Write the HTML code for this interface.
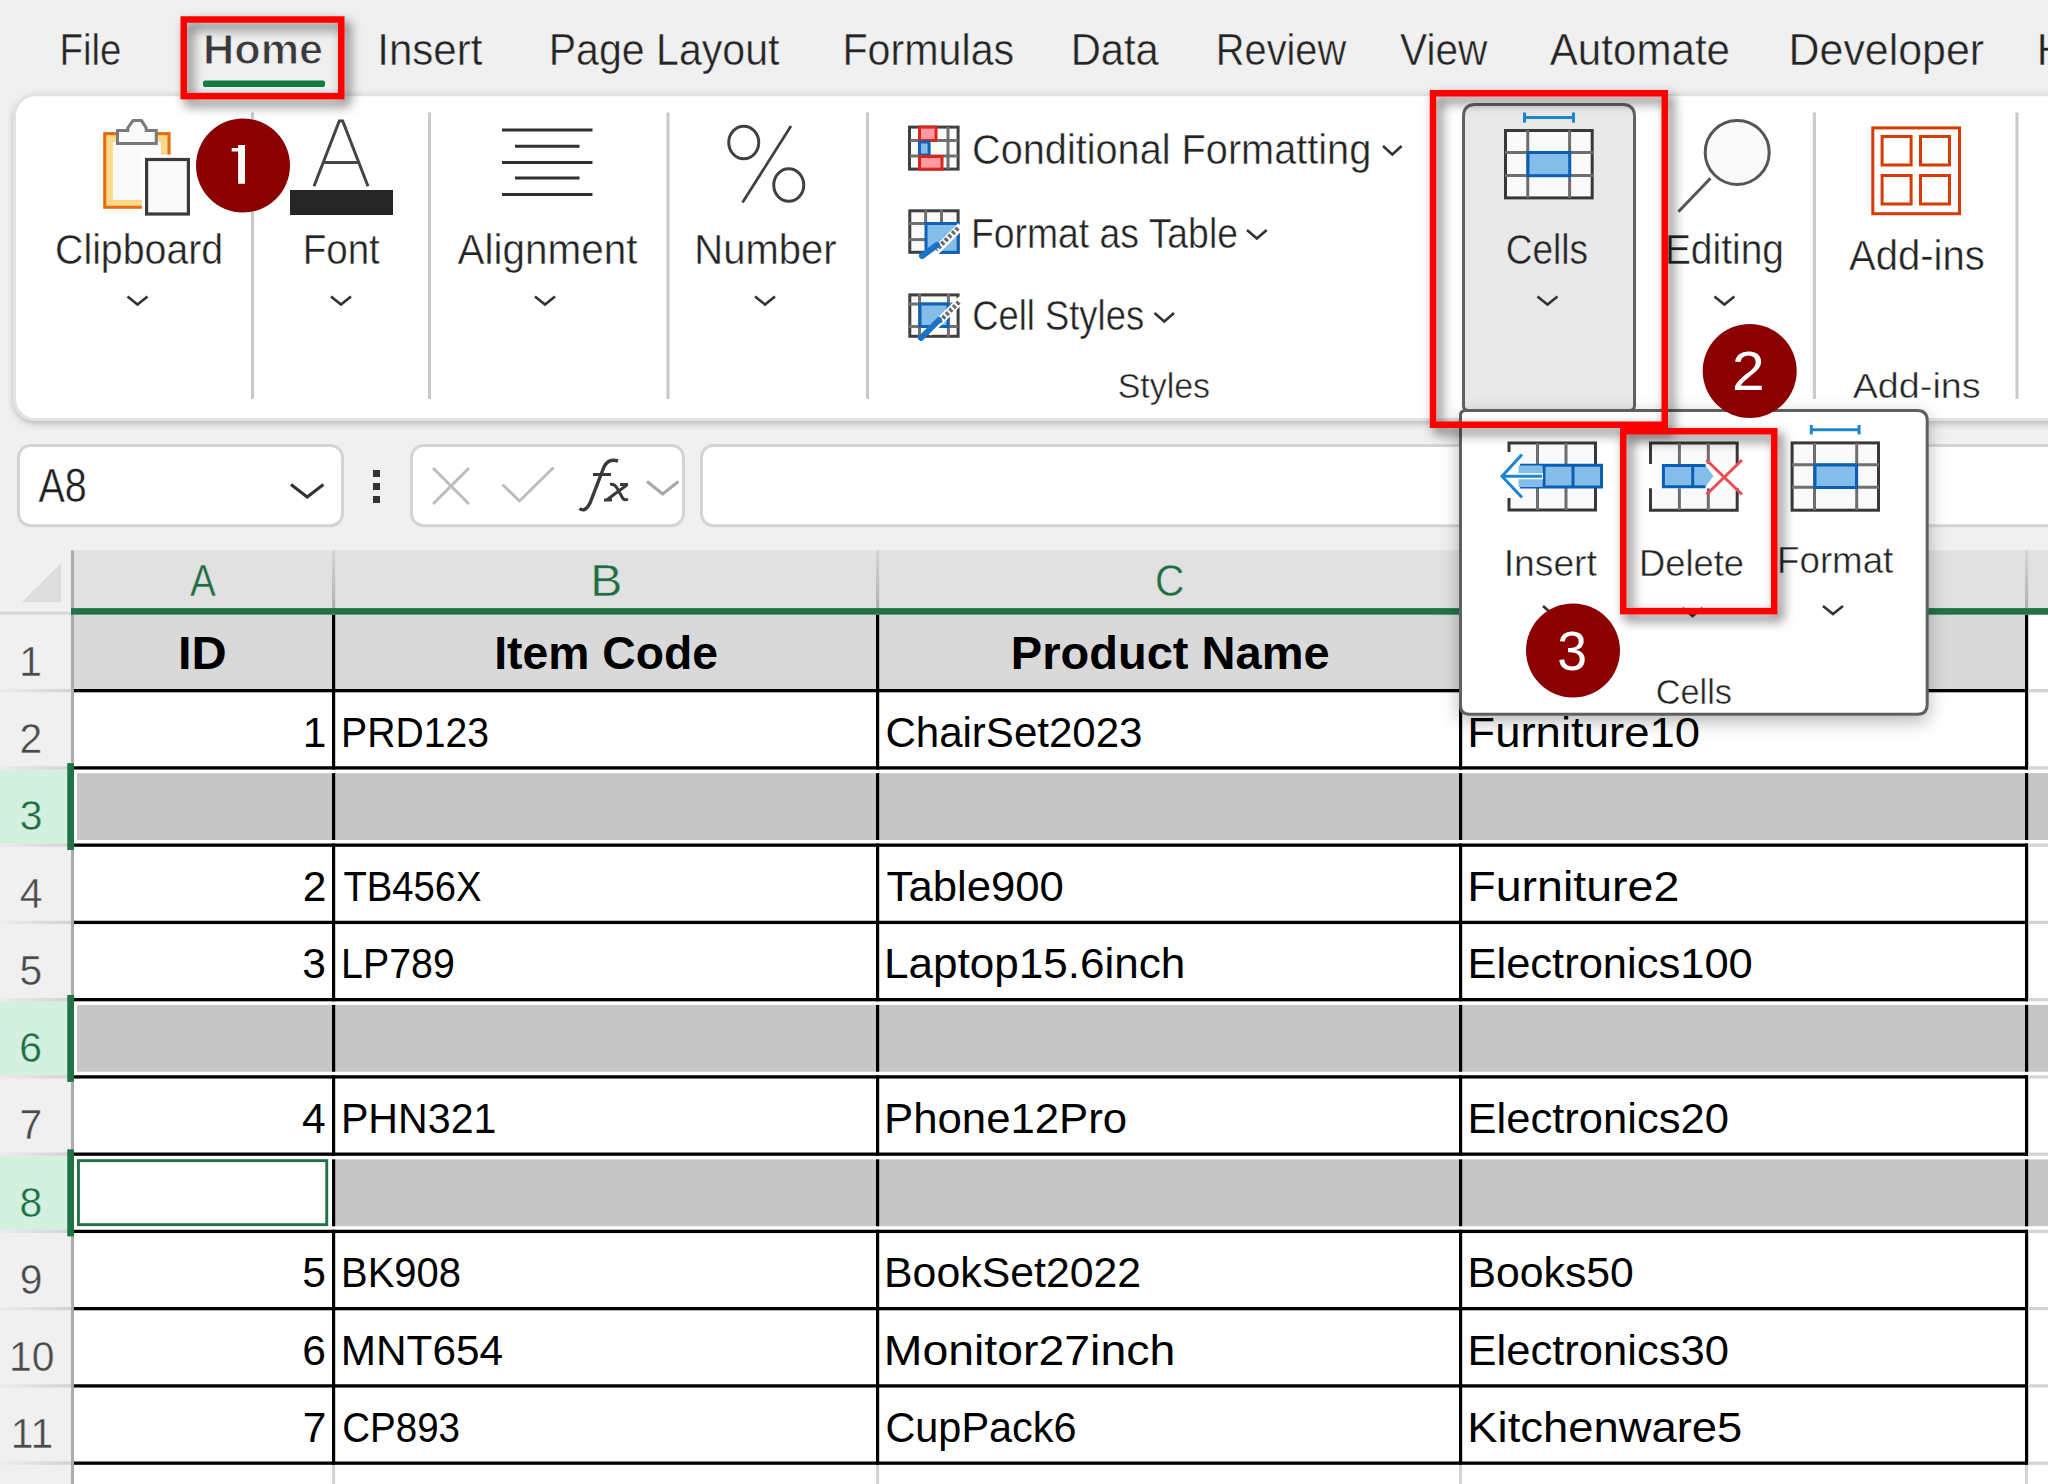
<!DOCTYPE html>
<html><head><meta charset="utf-8"><style>
html,body{margin:0;padding:0;background:#f0f0f0;overflow:hidden;}
svg{display:block;font-family:"Liberation Sans", sans-serif;}
</style></head><body>
<svg width="2048" height="1484" viewBox="0 0 2048 1484">
<defs>
<filter id="ribshadow" x="-5%" y="-10%" width="110%" height="130%"><feDropShadow dx="0" dy="3" stdDeviation="3" flood-color="#000" flood-opacity="0.22"/></filter>
<filter id="popshadow" x="-20%" y="-20%" width="140%" height="140%"><feDropShadow dx="0" dy="6" stdDeviation="9" flood-color="#000" flood-opacity="0.28"/></filter>
<filter id="redshadow" x="-10%" y="-10%" width="120%" height="120%"><feDropShadow dx="5" dy="6" stdDeviation="6" flood-color="#000" flood-opacity="0.6"/></filter>
<linearGradient id="hsep" x1="0" y1="0" x2="0" y2="1"><stop offset="0" stop-color="#d6d6d6"/><stop offset="1" stop-color="#b0b0b0"/></linearGradient>
<linearGradient id="rsep" x1="0" y1="0" x2="1" y2="0"><stop offset="0" stop-color="#ececec"/><stop offset="1" stop-color="#d2d2d2"/></linearGradient>
</defs>
<rect x="0.00" y="0.00" width="2048.00" height="1484.00" fill="#f0f0f0" />
<rect x="203" y="80.5" width="122" height="6.4" rx="2" fill="#107c41"/>

<rect x="14.5" y="94.7" width="2100" height="324.9" rx="21" fill="#ffffff" stroke="#e2e2e2" stroke-width="3" filter="url(#ribshadow)"/>
<rect x="251.00" y="112.50" width="3.00" height="286.50" fill="#c9c9c9" />
<rect x="428.00" y="112.50" width="3.00" height="286.50" fill="#c9c9c9" />
<rect x="666.50" y="112.50" width="3.00" height="286.50" fill="#c9c9c9" />
<rect x="866.00" y="112.50" width="3.00" height="286.50" fill="#c9c9c9" />
<rect x="1812.90" y="112.50" width="3.00" height="286.50" fill="#c9c9c9" />
<rect x="2015.50" y="112.50" width="3.00" height="286.50" fill="#c9c9c9" />
<rect x="103.20" y="132.10" width="67.40" height="76.70" fill="#e46c0a" />
<rect x="106.30" y="135.20" width="61.20" height="70.50" fill="#f8d98b" />
<rect x="112.90" y="141.80" width="48.00" height="58.10" fill="#fafafa" />
<rect x="141.80" y="154.60" width="52.00" height="65.00" fill="#ffffff" />
<rect x="146.60" y="159.50" width="41.80" height="54.50" rx="0" fill="#fafafa" stroke="#3a3a3a" stroke-width="3.2" />
<path d="M117.5,143.4 H156.3 V130.5 H146.2 V128 L141.5,120.6 H133 L127.8,128 V130.5 H117.5 Z" fill="#fafafa" stroke="#7a7a7a" stroke-width="3"/>
<polyline points="314.00,186.30 339.30,121.00 342.70,121.00 368.00,186.30" fill="none" stroke="#454545" stroke-width="3" stroke-linejoin="miter"/>
<line x1="323.00" y1="162.50" x2="359.00" y2="162.50" stroke="#454545" stroke-width="3" />
<rect x="290.00" y="190.00" width="103.00" height="25.00" fill="#262626" />
<rect x="502.00" y="128.50" width="90.50" height="3.00" fill="#303030" />
<rect x="515.00" y="144.75" width="64.50" height="3.00" fill="#303030" />
<rect x="502.00" y="161.00" width="90.50" height="3.00" fill="#303030" />
<rect x="515.00" y="176.50" width="64.50" height="3.00" fill="#303030" />
<rect x="502.00" y="193.00" width="90.50" height="3.00" fill="#303030" />
<ellipse cx="743.75" cy="142.5" rx="15" ry="16.3" fill="none" stroke="#404040" stroke-width="3"/>
<ellipse cx="788.75" cy="185" rx="15" ry="16.3" fill="none" stroke="#404040" stroke-width="3"/>
<line x1="791.00" y1="126.00" x2="742.50" y2="202.50" stroke="#404040" stroke-width="2.8" />
<polyline points="127.50,296.50 137.50,304.50 147.50,296.50" fill="none" stroke="#333333" stroke-width="2.6" stroke-linejoin="miter"/>
<polyline points="331.00,296.50 341.00,304.50 351.00,296.50" fill="none" stroke="#333333" stroke-width="2.6" stroke-linejoin="miter"/>
<polyline points="535.00,296.50 545.00,304.50 555.00,296.50" fill="none" stroke="#333333" stroke-width="2.6" stroke-linejoin="miter"/>
<polyline points="755.00,296.50 765.00,304.50 775.00,296.50" fill="none" stroke="#333333" stroke-width="2.6" stroke-linejoin="miter"/>
<polyline points="1714.40,296.50 1724.40,304.50 1734.40,296.50" fill="none" stroke="#333333" stroke-width="2.6" stroke-linejoin="miter"/>
<rect x="909.50" y="127.10" width="48.60" height="42.00" rx="0" fill="#fafafa" stroke="#404040" stroke-width="3" />
<line x1="948.00" y1="127.00" x2="948.00" y2="169.00" stroke="#707070" stroke-width="3" />
<line x1="910.00" y1="140.50" x2="958.00" y2="140.50" stroke="#707070" stroke-width="3" />
<line x1="910.00" y1="156.00" x2="958.00" y2="156.00" stroke="#707070" stroke-width="3" />
<rect x="919.50" y="127.10" width="16.50" height="13.40" rx="0" fill="#ff9aa2" stroke="#d9261c" stroke-width="3" />
<rect x="919.50" y="142.00" width="9.60" height="13.00" rx="0" fill="#85bde9" stroke="#0f62b8" stroke-width="3" />
<rect x="919.50" y="156.50" width="22.50" height="12.60" rx="0" fill="#ff9aa2" stroke="#d9261c" stroke-width="3" />
<rect x="909.80" y="210.80" width="48.30" height="41.50" rx="0" fill="#fafafa" stroke="#404040" stroke-width="3" />
<line x1="925.60" y1="210.00" x2="925.60" y2="223.00" stroke="#707070" stroke-width="3" />
<line x1="941.50" y1="210.00" x2="941.50" y2="223.00" stroke="#707070" stroke-width="3" />
<line x1="909.00" y1="223.50" x2="925.00" y2="223.50" stroke="#707070" stroke-width="3" />
<line x1="909.00" y1="239.60" x2="925.00" y2="239.60" stroke="#707070" stroke-width="3" />
<rect x="926.00" y="223.50" width="32.10" height="28.80" rx="0" fill="#85bde9" stroke="#0f62b8" stroke-width="3" />
<line x1="961.00" y1="226.00" x2="930.00" y2="257.00" stroke="#ffffff" stroke-width="8" />
<line x1="958.00" y1="228.00" x2="936.00" y2="250.00" stroke="#6a6a6a" stroke-width="4.5" stroke-dasharray="3 2"/>
<line x1="937.00" y1="245.00" x2="922.00" y2="256.00" stroke="#1a73c8" stroke-width="6" stroke-linecap="round"/>
<rect x="909.80" y="294.90" width="48.30" height="41.40" rx="0" fill="#fafafa" stroke="#404040" stroke-width="3" />
<line x1="919.50" y1="294.00" x2="919.50" y2="337.00" stroke="#707070" stroke-width="3" />
<line x1="948.40" y1="294.00" x2="948.40" y2="337.00" stroke="#707070" stroke-width="3" />
<line x1="909.00" y1="304.00" x2="958.00" y2="304.00" stroke="#707070" stroke-width="3" />
<line x1="909.00" y1="326.60" x2="958.00" y2="326.60" stroke="#707070" stroke-width="3" />
<rect x="920.00" y="304.00" width="28.00" height="22.50" rx="0" fill="#85bde9" stroke="#0f62b8" stroke-width="3" />
<line x1="962.00" y1="299.00" x2="928.00" y2="333.00" stroke="#ffffff" stroke-width="8" />
<line x1="959.00" y1="302.00" x2="938.00" y2="323.00" stroke="#6a6a6a" stroke-width="4.5" stroke-dasharray="3 2"/>
<line x1="939.00" y1="320.00" x2="921.00" y2="338.00" stroke="#1a73c8" stroke-width="6" stroke-linecap="round"/>
<polyline points="1383.00,146.00 1392.30,154.50 1401.60,146.00" fill="none" stroke="#333333" stroke-width="2.6" stroke-linejoin="miter"/>
<polyline points="1247.00,230.00 1256.85,238.50 1266.70,230.00" fill="none" stroke="#333333" stroke-width="2.6" stroke-linejoin="miter"/>
<polyline points="1154.50,313.00 1164.25,321.50 1174.00,313.00" fill="none" stroke="#333333" stroke-width="2.6" stroke-linejoin="miter"/>
<path d="M1475.5,104.5 H1622.5 Q1634.5,104.5 1634.5,116.5 V405.4 Q1634.5,410.4 1629.5,410.4 H1468.5 Q1463.5,410.4 1463.5,405.4 V116.5 Q1463.5,104.5 1475.5,104.5 Z" fill="#e9e9e9" stroke="#616161" stroke-width="3"/>
<line x1="1524.50" y1="117.60" x2="1573.50" y2="117.60" stroke="#1a86d0" stroke-width="3" />
<line x1="1524.50" y1="112.50" x2="1524.50" y2="122.60" stroke="#1a86d0" stroke-width="3" />
<line x1="1573.50" y1="112.50" x2="1573.50" y2="122.60" stroke="#1a86d0" stroke-width="3" />
<rect x="1505.50" y="130.50" width="86.70" height="67.40" rx="0" fill="#fafafa" stroke="#383838" stroke-width="3" />
<line x1="1527.75" y1="130.00" x2="1527.75" y2="198.00" stroke="#6e6e6e" stroke-width="3" />
<line x1="1569.60" y1="130.00" x2="1569.60" y2="198.00" stroke="#6e6e6e" stroke-width="3" />
<line x1="1505.00" y1="152.50" x2="1593.00" y2="152.50" stroke="#6e6e6e" stroke-width="3" />
<line x1="1505.00" y1="175.60" x2="1593.00" y2="175.60" stroke="#6e6e6e" stroke-width="3" />
<rect x="1528.00" y="152.50" width="41.70" height="23.20" rx="0" fill="#85bdea" stroke="#0a5fb4" stroke-width="3" />
<polyline points="1537.50,296.50 1547.50,304.50 1557.50,296.50" fill="none" stroke="#333333" stroke-width="2.6" stroke-linejoin="miter"/>
<circle cx="1737.2" cy="152.4" r="32" fill="#fafafa" stroke="#555555" stroke-width="3"/>
<line x1="1710.50" y1="178.30" x2="1678.40" y2="211.70" stroke="#555555" stroke-width="3" />
<rect x="1872.80" y="127.90" width="86.70" height="85.80" rx="0" fill="none" stroke="#d83b01" stroke-width="3" />
<rect x="1882.10" y="136.50" width="29.00" height="28.50" rx="0" fill="none" stroke="#d83b01" stroke-width="3" />
<rect x="1920.50" y="136.50" width="29.00" height="28.50" rx="0" fill="none" stroke="#d83b01" stroke-width="3" />
<rect x="1882.10" y="175.50" width="29.00" height="28.50" rx="0" fill="none" stroke="#d83b01" stroke-width="3" />
<rect x="1920.50" y="175.50" width="29.00" height="28.50" rx="0" fill="none" stroke="#d83b01" stroke-width="3" />
<text x="59.42" y="64.50" font-size="43.46" textLength="61.97" lengthAdjust="spacingAndGlyphs" fill="#242424" stroke="#f0f0f0" stroke-width="0.45">File</text>
<text x="377.21" y="64.50" font-size="43.46" textLength="105.19" lengthAdjust="spacingAndGlyphs" fill="#242424" stroke="#f0f0f0" stroke-width="0.45">Insert</text>
<text x="548.71" y="64.50" font-size="43.46" textLength="230.70" lengthAdjust="spacingAndGlyphs" fill="#242424" stroke="#f0f0f0" stroke-width="0.45">Page Layout</text>
<text x="842.45" y="64.50" font-size="43.46" textLength="171.78" lengthAdjust="spacingAndGlyphs" fill="#242424" stroke="#f0f0f0" stroke-width="0.45">Formulas</text>
<text x="1070.66" y="64.50" font-size="43.46" textLength="88.18" lengthAdjust="spacingAndGlyphs" fill="#242424" stroke="#f0f0f0" stroke-width="0.45">Data</text>
<text x="1215.82" y="64.50" font-size="43.46" textLength="130.37" lengthAdjust="spacingAndGlyphs" fill="#242424" stroke="#f0f0f0" stroke-width="0.45">Review</text>
<text x="1400.00" y="64.50" font-size="43.46" textLength="87.43" lengthAdjust="spacingAndGlyphs" fill="#242424" stroke="#f0f0f0" stroke-width="0.45">View</text>
<text x="1549.75" y="64.50" font-size="43.46" textLength="180.27" lengthAdjust="spacingAndGlyphs" fill="#242424" stroke="#f0f0f0" stroke-width="0.45">Automate</text>
<text x="1788.57" y="64.50" font-size="43.46" textLength="195.49" lengthAdjust="spacingAndGlyphs" fill="#242424" stroke="#f0f0f0" stroke-width="0.45">Developer</text>
<text x="203.01" y="64.10" font-size="42.73" textLength="120.12" lengthAdjust="spacingAndGlyphs" fill="#3a3a3a" font-weight="bold" stroke="#f0f0f0" stroke-width="1.1">Home</text>
<text x="2036.63" y="64.50" font-size="43.46" textLength="30.41" lengthAdjust="spacingAndGlyphs" fill="#242424" stroke="#f0f0f0" stroke-width="0.45">H</text>
<text x="55.04" y="263.90" font-size="42.73" textLength="168.17" lengthAdjust="spacingAndGlyphs" fill="#242424" stroke="#ffffff" stroke-width="0.45">Clipboard</text>
<text x="302.72" y="263.90" font-size="42.73" textLength="77.10" lengthAdjust="spacingAndGlyphs" fill="#242424" stroke="#ffffff" stroke-width="0.45">Font</text>
<text x="457.50" y="263.90" font-size="42.73" textLength="179.91" lengthAdjust="spacingAndGlyphs" fill="#242424" stroke="#ffffff" stroke-width="0.45">Alignment</text>
<text x="694.30" y="263.90" font-size="42.73" textLength="142.22" lengthAdjust="spacingAndGlyphs" fill="#242424" stroke="#ffffff" stroke-width="0.45">Number</text>
<text x="1505.64" y="263.90" font-size="42.73" textLength="82.47" lengthAdjust="spacingAndGlyphs" fill="#242424" stroke="#e9e9e9" stroke-width="0.45">Cells</text>
<text x="1664.88" y="263.90" font-size="42.73" textLength="119.10" lengthAdjust="spacingAndGlyphs" fill="#242424" stroke="#ffffff" stroke-width="0.45">Editing</text>
<text x="1849.00" y="270.00" font-size="42.73" textLength="135.80" lengthAdjust="spacingAndGlyphs" fill="#242424" stroke="#ffffff" stroke-width="0.45">Add-ins</text>
<text x="972.02" y="163.75" font-size="41.72" textLength="399.21" lengthAdjust="spacingAndGlyphs" fill="#242424" stroke="#ffffff" stroke-width="0.45">Conditional Formatting</text>
<text x="971.02" y="247.50" font-size="41.72" textLength="266.92" lengthAdjust="spacingAndGlyphs" fill="#242424" stroke="#ffffff" stroke-width="0.45">Format as Table</text>
<text x="972.18" y="330.40" font-size="41.72" textLength="171.91" lengthAdjust="spacingAndGlyphs" fill="#242424" stroke="#ffffff" stroke-width="0.45">Cell Styles</text>
<text x="1117.64" y="398.00" font-size="35.03" textLength="92.37" lengthAdjust="spacingAndGlyphs" fill="#242424" stroke="#ffffff" stroke-width="0.45">Styles</text>
<text x="1852.70" y="397.70" font-size="35.03" textLength="127.93" lengthAdjust="spacingAndGlyphs" fill="#242424" stroke="#ffffff" stroke-width="0.45">Add-ins</text>
<rect x="18.50" y="445.50" width="324.00" height="80.20" rx="12" fill="#ffffff" stroke="#d4d4d4" stroke-width="3" />
<polyline points="291.00,484.50 307.20,497.00 323.40,484.50" fill="none" stroke="#333333" stroke-width="3" />
<rect x="373.00" y="470.00" width="7.00" height="7.00" fill="#333333" />
<rect x="373.00" y="483.00" width="7.00" height="7.00" fill="#333333" />
<rect x="373.00" y="496.00" width="7.00" height="7.00" fill="#333333" />
<rect x="411.50" y="445.50" width="272.00" height="80.20" rx="12" fill="#ffffff" stroke="#d4d4d4" stroke-width="3" />
<line x1="433.00" y1="468.00" x2="469.00" y2="504.00" stroke="#bdbdbd" stroke-width="3" />
<line x1="469.00" y1="468.00" x2="433.00" y2="504.00" stroke="#bdbdbd" stroke-width="3" />
<polyline points="502.50,484.50 519.50,501.00 553.50,467.50" fill="none" stroke="#bdbdbd" stroke-width="3" />
<path d="M579.5,508.5 Q585,513 590,503 L604,467 Q608,458 618,461" fill="none" stroke="#3a3a3a" stroke-width="3.4"/>
<line x1="593.00" y1="474.50" x2="611.00" y2="474.50" stroke="#3a3a3a" stroke-width="3" />
<path d="M610,484.5 Q614,483 617,488 L622,497 Q624,501 628,499 M627.5,484.5 L606,500.5 M604,500 H612 M620,484.5 H628" fill="none" stroke="#3a3a3a" stroke-width="3"/>
<polyline points="647.00,481.50 662.70,494.00 678.40,481.50" fill="none" stroke="#a8a8a8" stroke-width="3" />
<rect x="701.50" y="445.50" width="1497.00" height="80.20" rx="12" fill="#ffffff" stroke="#d4d4d4" stroke-width="3" />
<text x="38.40" y="502.00" font-size="47.38" textLength="48.33" lengthAdjust="spacingAndGlyphs" fill="#202020" stroke="#ffffff" stroke-width="0.45">A8</text>
<rect x="74.00" y="550.30" width="1974.00" height="58.00" fill="#e1e1e1" />
<polygon points="22,602 61,602 61,563.2" fill="#dddddd"/>
<rect x="332" y="550.3" width="3.2" height="58" fill="url(#hsep)"/>
<rect x="876" y="550.3" width="3.2" height="58" fill="url(#hsep)"/>
<rect x="1459" y="550.3" width="3.2" height="58" fill="url(#hsep)"/>
<rect x="2025" y="550.3" width="3.2" height="58" fill="url(#hsep)"/>
<rect x="0.00" y="611.70" width="71.00" height="3.30" fill="#d8d8d8" />
<rect x="74.00" y="614.70" width="1974.00" height="870.00" fill="#ffffff" />
<rect x="74.00" y="614.70" width="1951.00" height="74.30" fill="#d9d9d9" />
<rect x="0.00" y="614.70" width="71.00" height="870.00" fill="#f0f0f0" />
<rect x="0.00" y="769.55" width="67.50" height="73.95" fill="#d3f0e0" />
<rect x="0.00" y="1001.30" width="67.50" height="73.95" fill="#d3f0e0" />
<rect x="0.00" y="1155.80" width="67.50" height="73.95" fill="#d3f0e0" />
<rect x="0.00" y="689.00" width="71.00" height="3.30" fill="url(#rsep)" />
<rect x="0.00" y="766.25" width="71.00" height="3.30" fill="url(#rsep)" />
<rect x="0.00" y="843.50" width="71.00" height="3.30" fill="url(#rsep)" />
<rect x="0.00" y="920.75" width="71.00" height="3.30" fill="url(#rsep)" />
<rect x="0.00" y="998.00" width="71.00" height="3.30" fill="url(#rsep)" />
<rect x="0.00" y="1075.25" width="71.00" height="3.30" fill="url(#rsep)" />
<rect x="0.00" y="1152.50" width="71.00" height="3.30" fill="url(#rsep)" />
<rect x="0.00" y="1229.75" width="71.00" height="3.30" fill="url(#rsep)" />
<rect x="0.00" y="1307.00" width="71.00" height="3.30" fill="url(#rsep)" />
<rect x="0.00" y="1384.25" width="71.00" height="3.30" fill="url(#rsep)" />
<rect x="0.00" y="1461.50" width="71.00" height="3.30" fill="url(#rsep)" />
<rect x="332.00" y="614.70" width="3.20" height="850.10" fill="#000000" />
<rect x="332.00" y="1464.80" width="3.20" height="30.00" fill="#d4d4d4" />
<rect x="876.00" y="614.70" width="3.20" height="850.10" fill="#000000" />
<rect x="876.00" y="1464.80" width="3.20" height="30.00" fill="#d4d4d4" />
<rect x="1459.00" y="614.70" width="3.20" height="850.10" fill="#000000" />
<rect x="1459.00" y="1464.80" width="3.20" height="30.00" fill="#d4d4d4" />
<rect x="2025.00" y="614.70" width="3.20" height="850.10" fill="#000000" />
<rect x="2025.00" y="1464.80" width="3.20" height="30.00" fill="#d4d4d4" />
<rect x="74.00" y="769.55" width="1974.00" height="73.95" fill="#ffffff" />
<rect x="77.00" y="773.15" width="1971.00" height="66.85" fill="#c6c6c6" />
<rect x="332.00" y="773.15" width="3.20" height="66.85" fill="#000000" />
<rect x="876.00" y="773.15" width="3.20" height="66.85" fill="#000000" />
<rect x="1459.00" y="773.15" width="3.20" height="66.85" fill="#000000" />
<rect x="2025.00" y="773.15" width="3.20" height="66.85" fill="#000000" />
<rect x="74.00" y="1001.30" width="1974.00" height="73.95" fill="#ffffff" />
<rect x="77.00" y="1004.90" width="1971.00" height="66.85" fill="#c6c6c6" />
<rect x="332.00" y="1004.90" width="3.20" height="66.85" fill="#000000" />
<rect x="876.00" y="1004.90" width="3.20" height="66.85" fill="#000000" />
<rect x="1459.00" y="1004.90" width="3.20" height="66.85" fill="#000000" />
<rect x="2025.00" y="1004.90" width="3.20" height="66.85" fill="#000000" />
<rect x="74.00" y="1155.80" width="1974.00" height="73.95" fill="#ffffff" />
<rect x="77.00" y="1159.40" width="1971.00" height="66.85" fill="#c6c6c6" />
<rect x="332.00" y="1159.40" width="3.20" height="66.85" fill="#000000" />
<rect x="876.00" y="1159.40" width="3.20" height="66.85" fill="#000000" />
<rect x="1459.00" y="1159.40" width="3.20" height="66.85" fill="#000000" />
<rect x="2025.00" y="1159.40" width="3.20" height="66.85" fill="#000000" />
<rect x="74.00" y="1155.80" width="258.00" height="73.95" fill="#ffffff" />
<rect x="78.45" y="1160.65" width="248.30" height="64.00" rx="0" fill="none" stroke="#217346" stroke-width="2.9" />
<rect x="74.00" y="689.00" width="1954.00" height="3.30" fill="#000000" />
<rect x="2028.20" y="689.00" width="20.00" height="3.30" fill="#d4d4d4" />
<rect x="74.00" y="766.25" width="1954.00" height="3.30" fill="#000000" />
<rect x="2028.20" y="766.25" width="20.00" height="3.30" fill="#d4d4d4" />
<rect x="74.00" y="843.50" width="1954.00" height="3.30" fill="#000000" />
<rect x="2028.20" y="843.50" width="20.00" height="3.30" fill="#d4d4d4" />
<rect x="74.00" y="920.75" width="1954.00" height="3.30" fill="#000000" />
<rect x="2028.20" y="920.75" width="20.00" height="3.30" fill="#d4d4d4" />
<rect x="74.00" y="998.00" width="1954.00" height="3.30" fill="#000000" />
<rect x="2028.20" y="998.00" width="20.00" height="3.30" fill="#d4d4d4" />
<rect x="74.00" y="1075.25" width="1954.00" height="3.30" fill="#000000" />
<rect x="2028.20" y="1075.25" width="20.00" height="3.30" fill="#d4d4d4" />
<rect x="74.00" y="1152.50" width="1954.00" height="3.30" fill="#000000" />
<rect x="2028.20" y="1152.50" width="20.00" height="3.30" fill="#d4d4d4" />
<rect x="74.00" y="1229.75" width="1954.00" height="3.30" fill="#000000" />
<rect x="2028.20" y="1229.75" width="20.00" height="3.30" fill="#d4d4d4" />
<rect x="74.00" y="1307.00" width="1954.00" height="3.30" fill="#000000" />
<rect x="2028.20" y="1307.00" width="20.00" height="3.30" fill="#d4d4d4" />
<rect x="74.00" y="1384.25" width="1954.00" height="3.30" fill="#000000" />
<rect x="2028.20" y="1384.25" width="20.00" height="3.30" fill="#d4d4d4" />
<rect x="74.00" y="1461.50" width="1954.00" height="3.30" fill="#000000" />
<rect x="2028.20" y="1461.50" width="20.00" height="3.30" fill="#d4d4d4" />
<rect x="67.50" y="763.25" width="6.50" height="86.75" fill="#217346" />
<rect x="67.50" y="995.00" width="6.50" height="86.75" fill="#217346" />
<rect x="67.50" y="1149.50" width="6.50" height="86.75" fill="#217346" />
<rect x="71.00" y="550.30" width="3.00" height="934.00" fill="#ababab" />
<rect x="67.50" y="763.25" width="6.50" height="86.75" fill="#217346" />
<rect x="67.50" y="995.00" width="6.50" height="86.75" fill="#217346" />
<rect x="67.50" y="1149.50" width="6.50" height="86.75" fill="#217346" />
<rect x="71.00" y="608.10" width="1977.00" height="6.60" fill="#217346" />
<text x="190.00" y="595.60" font-size="43.60" textLength="25.88" lengthAdjust="spacingAndGlyphs" fill="#1e6e42" stroke="#e1e1e1" stroke-width="0.45">A</text>
<text x="590.15" y="595.60" font-size="43.60" textLength="32.11" lengthAdjust="spacingAndGlyphs" fill="#1e6e42" stroke="#e1e1e1" stroke-width="0.45">B</text>
<text x="1154.97" y="595.60" font-size="43.60" textLength="29.34" lengthAdjust="spacingAndGlyphs" fill="#1e6e42" stroke="#e1e1e1" stroke-width="0.45">C</text>
<text x="178.08" y="669.20" font-size="46.80" textLength="48.69" lengthAdjust="spacingAndGlyphs" fill="#000000" font-weight="bold">ID</text>
<text x="494.22" y="669.20" font-size="46.80" textLength="223.79" lengthAdjust="spacingAndGlyphs" fill="#000000" font-weight="bold">Item Code</text>
<text x="1010.78" y="669.20" font-size="46.80" textLength="318.95" lengthAdjust="spacingAndGlyphs" fill="#000000" font-weight="bold">Product Name</text>
<text x="302.80" y="746.50" font-size="41.86" textLength="23.66" lengthAdjust="spacingAndGlyphs" fill="#000000">1</text>
<text x="341.07" y="746.50" font-size="41.86" textLength="147.95" lengthAdjust="spacingAndGlyphs" fill="#000000">PRD123</text>
<text x="885.40" y="746.50" font-size="41.86" textLength="257.12" lengthAdjust="spacingAndGlyphs" fill="#000000">ChairSet2023</text>
<text x="1467.36" y="746.50" font-size="41.86" textLength="232.69" lengthAdjust="spacingAndGlyphs" fill="#000000">Furniture10</text>
<text x="302.80" y="901.00" font-size="41.86" textLength="23.66" lengthAdjust="spacingAndGlyphs" fill="#000000">2</text>
<text x="343.44" y="901.00" font-size="41.86" textLength="138.11" lengthAdjust="spacingAndGlyphs" fill="#000000">TB456X</text>
<text x="886.63" y="901.00" font-size="41.86" textLength="177.25" lengthAdjust="spacingAndGlyphs" fill="#000000">Table900</text>
<text x="1467.28" y="901.00" font-size="41.86" textLength="212.07" lengthAdjust="spacingAndGlyphs" fill="#000000">Furniture2</text>
<text x="302.38" y="978.25" font-size="41.86" textLength="23.66" lengthAdjust="spacingAndGlyphs" fill="#000000">3</text>
<text x="341.05" y="978.25" font-size="41.86" textLength="113.76" lengthAdjust="spacingAndGlyphs" fill="#000000">LP789</text>
<text x="883.98" y="978.25" font-size="41.86" textLength="301.30" lengthAdjust="spacingAndGlyphs" fill="#000000">Laptop15.6inch</text>
<text x="1467.52" y="978.25" font-size="41.86" textLength="285.25" lengthAdjust="spacingAndGlyphs" fill="#000000">Electronics100</text>
<text x="301.95" y="1132.75" font-size="41.86" textLength="23.66" lengthAdjust="spacingAndGlyphs" fill="#000000">4</text>
<text x="340.91" y="1132.75" font-size="41.86" textLength="155.49" lengthAdjust="spacingAndGlyphs" fill="#000000">PHN321</text>
<text x="884.00" y="1132.75" font-size="41.86" textLength="243.18" lengthAdjust="spacingAndGlyphs" fill="#000000">Phone12Pro</text>
<text x="1467.52" y="1132.75" font-size="41.86" textLength="261.46" lengthAdjust="spacingAndGlyphs" fill="#000000">Electronics20</text>
<text x="302.38" y="1287.25" font-size="41.86" textLength="23.66" lengthAdjust="spacingAndGlyphs" fill="#000000">5</text>
<text x="341.00" y="1287.25" font-size="41.86" textLength="119.94" lengthAdjust="spacingAndGlyphs" fill="#000000">BK908</text>
<text x="884.07" y="1287.25" font-size="41.86" textLength="257.10" lengthAdjust="spacingAndGlyphs" fill="#000000">BookSet2022</text>
<text x="1467.58" y="1287.25" font-size="41.86" textLength="166.26" lengthAdjust="spacingAndGlyphs" fill="#000000">Books50</text>
<text x="302.38" y="1364.50" font-size="41.86" textLength="23.66" lengthAdjust="spacingAndGlyphs" fill="#000000">6</text>
<text x="340.81" y="1364.50" font-size="41.86" textLength="162.29" lengthAdjust="spacingAndGlyphs" fill="#000000">MNT654</text>
<text x="883.79" y="1364.50" font-size="41.86" textLength="291.42" lengthAdjust="spacingAndGlyphs" fill="#000000">Monitor27inch</text>
<text x="1467.52" y="1364.50" font-size="41.86" textLength="261.46" lengthAdjust="spacingAndGlyphs" fill="#000000">Electronics30</text>
<text x="302.80" y="1441.75" font-size="41.86" textLength="23.66" lengthAdjust="spacingAndGlyphs" fill="#000000">7</text>
<text x="342.28" y="1441.75" font-size="41.86" textLength="117.72" lengthAdjust="spacingAndGlyphs" fill="#000000">CP893</text>
<text x="885.43" y="1441.75" font-size="41.86" textLength="191.07" lengthAdjust="spacingAndGlyphs" fill="#000000">CupPack6</text>
<text x="1467.37" y="1441.75" font-size="41.86" textLength="274.87" lengthAdjust="spacingAndGlyphs" fill="#000000">Kitchenware5</text>
<text x="19.15" y="675.75" font-size="43.02" textLength="22.73" lengthAdjust="spacingAndGlyphs" fill="#4a4a4a" stroke="#f0f0f0" stroke-width="0.45">1</text>
<text x="19.56" y="753.00" font-size="43.02" textLength="22.73" lengthAdjust="spacingAndGlyphs" fill="#4a4a4a" stroke="#f0f0f0" stroke-width="0.45">2</text>
<text x="19.76" y="830.25" font-size="43.02" textLength="22.73" lengthAdjust="spacingAndGlyphs" fill="#1e6e42" stroke="#d3f0e0" stroke-width="0.45">3</text>
<text x="19.76" y="907.50" font-size="43.02" textLength="22.73" lengthAdjust="spacingAndGlyphs" fill="#4a4a4a" stroke="#f0f0f0" stroke-width="0.45">4</text>
<text x="19.56" y="984.75" font-size="43.02" textLength="22.73" lengthAdjust="spacingAndGlyphs" fill="#4a4a4a" stroke="#f0f0f0" stroke-width="0.45">5</text>
<text x="19.35" y="1062.00" font-size="43.02" textLength="22.73" lengthAdjust="spacingAndGlyphs" fill="#1e6e42" stroke="#d3f0e0" stroke-width="0.45">6</text>
<text x="19.56" y="1139.25" font-size="43.02" textLength="22.73" lengthAdjust="spacingAndGlyphs" fill="#4a4a4a" stroke="#f0f0f0" stroke-width="0.45">7</text>
<text x="19.56" y="1216.50" font-size="43.02" textLength="22.73" lengthAdjust="spacingAndGlyphs" fill="#1e6e42" stroke="#d3f0e0" stroke-width="0.45">8</text>
<text x="19.76" y="1293.75" font-size="43.02" textLength="22.73" lengthAdjust="spacingAndGlyphs" fill="#4a4a4a" stroke="#f0f0f0" stroke-width="0.45">9</text>
<text x="9.08" y="1371.00" font-size="43.02" textLength="45.46" lengthAdjust="spacingAndGlyphs" fill="#4a4a4a" stroke="#f0f0f0" stroke-width="0.45">10</text>
<text x="10.80" y="1448.25" font-size="43.02" textLength="42.43" lengthAdjust="spacingAndGlyphs" fill="#4a4a4a" stroke="#f0f0f0" stroke-width="0.45">11</text>
<text x="9.28" y="1525.50" font-size="43.02" textLength="45.46" lengthAdjust="spacingAndGlyphs" fill="#4a4a4a" stroke="#f0f0f0" stroke-width="0.45">12</text>
<path d="M1465.5,410.45 H1917.2 Q1927.2,410.45 1927.2,420.45 V704.3 Q1927.2,714.3 1917.2,714.3 H1469.5 Q1460.5,714.3 1460.5,705.3 V415.45 Q1460.5,410.45 1465.5,410.45 Z" fill="#ffffff" stroke="#5f5f5f" stroke-width="3" filter="url(#popshadow)"/>
<rect x="1509.00" y="443.00" width="86.50" height="67.00" rx="0" fill="#fafafa" stroke="#383838" stroke-width="3" />
<line x1="1537.50" y1="443.00" x2="1537.50" y2="510.00" stroke="#6e6e6e" stroke-width="3" />
<line x1="1566.00" y1="443.00" x2="1566.00" y2="510.00" stroke="#6e6e6e" stroke-width="3" />
<rect x="1499.00" y="452.00" width="22.00" height="46.00" fill="#ffffff" />
<rect x="1521.50" y="465.25" width="80.00" height="21.75" rx="0" fill="#85bdea" stroke="#0a5fb4" stroke-width="3" />
<line x1="1573.00" y1="465.00" x2="1573.00" y2="487.00" stroke="#0a5fb4" stroke-width="3" />
<line x1="1544.00" y1="465.00" x2="1544.00" y2="487.00" stroke="#0a5fb4" stroke-width="3" />
<rect x="1518.50" y="465.50" width="24.00" height="21.50" fill="#85bdea" />
<line x1="1503.00" y1="476.20" x2="1543.00" y2="476.20" stroke="#ffffff" stroke-width="6" />
<line x1="1503.00" y1="476.20" x2="1542.00" y2="476.20" stroke="#1a86d0" stroke-width="3" />
<polyline points="1522.00,454.50 1502.00,476.20 1522.00,497.50" fill="none" stroke="#1a86d0" stroke-width="3" />
<path d="M1650.5,464 V443 H1737.2 V464 M1650.5,488.3 V510.2 H1737.2 V488.3" fill="#fafafa" stroke="#383838" stroke-width="3"/>
<line x1="1679.40" y1="443.00" x2="1679.40" y2="510.00" stroke="#6e6e6e" stroke-width="3" />
<line x1="1708.30" y1="443.00" x2="1708.30" y2="510.00" stroke="#6e6e6e" stroke-width="3" />
<rect x="1652.00" y="464.00" width="84.00" height="24.30" fill="#ffffff" />
<path d="M1663.4,465.5 H1705.5 L1713.5,476.1 L1705.5,486.8 H1663.4 Z" fill="#85bdea" stroke="none"/>
<path d="M1705.5,465.5 H1663.4 V486.8 H1705.5" fill="none" stroke="#0a5fb4" stroke-width="3"/>
<line x1="1692.70" y1="465.00" x2="1692.70" y2="487.00" stroke="#0a5fb4" stroke-width="3" />
<line x1="1706.50" y1="460.00" x2="1742.00" y2="494.50" stroke="#ef4b55" stroke-width="3" />
<line x1="1742.00" y1="460.00" x2="1706.50" y2="494.50" stroke="#ef4b55" stroke-width="3" />
<line x1="1811.30" y1="429.70" x2="1859.10" y2="429.70" stroke="#1a86d0" stroke-width="3" />
<line x1="1811.30" y1="425.00" x2="1811.30" y2="434.40" stroke="#1a86d0" stroke-width="3" />
<line x1="1859.10" y1="425.00" x2="1859.10" y2="434.40" stroke="#1a86d0" stroke-width="3" />
<rect x="1792.10" y="442.90" width="86.40" height="67.30" rx="0" fill="#fafafa" stroke="#383838" stroke-width="3" />
<line x1="1814.50" y1="443.00" x2="1814.50" y2="510.00" stroke="#6e6e6e" stroke-width="3" />
<line x1="1856.70" y1="443.00" x2="1856.70" y2="510.00" stroke="#6e6e6e" stroke-width="3" />
<line x1="1792.00" y1="464.80" x2="1879.00" y2="464.80" stroke="#6e6e6e" stroke-width="3" />
<line x1="1792.00" y1="487.20" x2="1879.00" y2="487.20" stroke="#6e6e6e" stroke-width="3" />
<rect x="1815.00" y="465.00" width="41.50" height="22.50" rx="0" fill="#85bdea" stroke="#0a5fb4" stroke-width="3" />
<polyline points="1823.00,606.00 1833.00,614.00 1843.00,606.00" fill="none" stroke="#333333" stroke-width="2.6" stroke-linejoin="miter"/>
<polyline points="1543.00,606.00 1552.00,614.00 1561.00,606.00" fill="none" stroke="#333333" stroke-width="2.6" stroke-linejoin="miter"/>
<polyline points="1682.50,608.00 1692.50,616.00 1702.50,608.00" fill="none" stroke="#333333" stroke-width="2.6" stroke-linejoin="miter"/>
<text x="1503.64" y="575.60" font-size="37.21" textLength="93.28" lengthAdjust="spacingAndGlyphs" fill="#242424" stroke="#ffffff" stroke-width="0.45">Insert</text>
<text x="1639.10" y="575.80" font-size="37.21" textLength="104.92" lengthAdjust="spacingAndGlyphs" fill="#242424" stroke="#ffffff" stroke-width="0.45">Delete</text>
<text x="1777.06" y="572.70" font-size="37.21" textLength="116.26" lengthAdjust="spacingAndGlyphs" fill="#242424" stroke="#ffffff" stroke-width="0.45">Format</text>
<text x="1655.78" y="703.75" font-size="35.03" textLength="76.24" lengthAdjust="spacingAndGlyphs" fill="#242424" stroke="#ffffff" stroke-width="0.45">Cells</text>
<g filter="url(#redshadow)">
<rect x="183.75" y="19.50" width="157.50" height="76.65" rx="0" fill="none" stroke="#ff0000" stroke-width="6.5" />
<rect x="1433.00" y="93.25" width="231.75" height="331.50" rx="0" fill="none" stroke="#ff0000" stroke-width="6.5" />
<rect x="1623.25" y="431.25" width="151.00" height="179.90" rx="0" fill="none" stroke="#ff0000" stroke-width="6.5" />
</g>
<circle cx="243" cy="165.5" r="47" fill="#8b0000"/>
<circle cx="1749.7" cy="371" r="47" fill="#8b0000"/>
<circle cx="1573" cy="650.5" r="47" fill="#8b0000"/>
<text x="1732.07" y="389.60" font-size="54.94" textLength="32.64" lengthAdjust="spacingAndGlyphs" fill="#ffffff">2</text>
<text x="1557.14" y="669.50" font-size="55.38" textLength="29.79" lengthAdjust="spacingAndGlyphs" fill="#ffffff">3</text>
<path d="M238.1,145 H245 V183.7 H238.1 V151.4 H231.7 V148 H238.1 Z" fill="#ffffff"/>
</svg>
</body></html>
